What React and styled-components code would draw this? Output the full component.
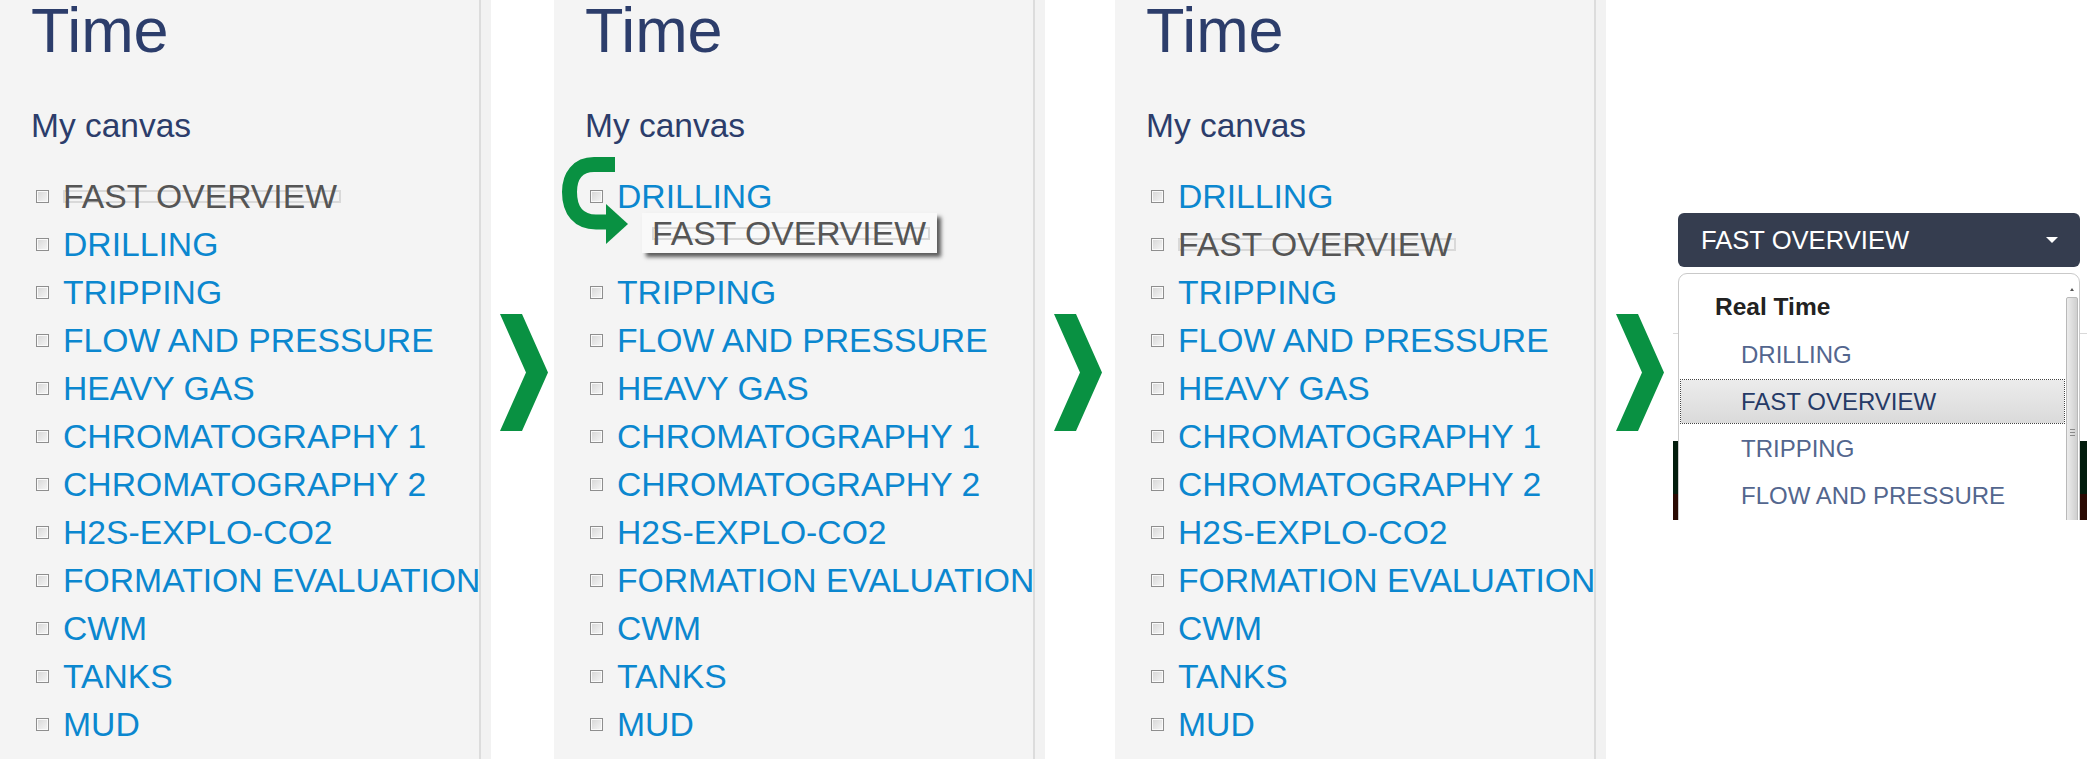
import React from 'react';
import styled, { createGlobalStyle } from 'styled-components';

const GlobalStyle = createGlobalStyle`
  html, body {
    margin: 0;
    padding: 0;
    background: #fff;
  }
  body {
    font-family: "Liberation Sans", Arial, sans-serif;
  }
`;

const Stage = styled.div`
  display: flex;
  width: 2087px;
  height: 759px;
  overflow: hidden;
  background: #fff;
`;

const Frame = styled.div`
  flex: none;
  display: flex;
  height: 100%;
  border-right: 10px solid #f2f2f2;
`;

const Panel = styled.section`
  position: relative;
  box-sizing: border-box;
  width: 481px;
  height: 100%;
  padding-left: 31px;
  background: #f4f4f4;
  border-right: 2px solid #dcdcdc;
  overflow: hidden;
`;

const Title = styled.h1`
  margin: 0;
  font-size: 63px;
  line-height: 60px;
  font-weight: normal;
  color: #2c3d6b;
`;

const Subtitle = styled.h2`
  margin: 42px 0 0;
  font-size: 33.5px;
  line-height: 48px;
  font-weight: normal;
  color: #2c3d6b;
`;

const List = styled.ul`
  margin: 22px 0 0;
  padding: 0;
  list-style: none;
`;

const Row = styled.li`
  position: relative;
  display: flex;
  align-items: center;
  height: 48px;
  font-size: 33.7px;
  line-height: 48px;
  white-space: nowrap;
`;

const Check = styled.span`
  flex: none;
  box-sizing: border-box;
  width: 13px;
  height: 13px;
  margin: 0 14px 0 5px;
  border: 1px solid #8e8e8e;
  background: linear-gradient(135deg, #d6d6d6, #f6f6f6);
  box-shadow: inset 0 0 0 1px #fafafa;
`;

const Label = styled.span`
  position: relative;
  z-index: 0;
  color: ${(p) => (p.$muted ? '#555' : '#0b87cf')};

  &::before {
    content: '';
    display: ${(p) => (p.$muted ? 'block' : 'none')};
    position: absolute;
    z-index: -1;
    left: 0;
    right: -4px;
    top: calc(50% - 6px);
    height: 13px;
    box-sizing: border-box;
    border: 2px solid #d9d9d9;
  }
`;

const Ghost = styled.div`
  position: absolute;
  left: 57px;
  top: -7px;
  box-sizing: border-box;
  width: 295px;
  height: 40px;
  padding-left: 10px;
  line-height: 40px;
  background: #f9f9f9;
  box-shadow: 4px 4px 4px rgba(40, 40, 40, 0.75);
`;

const DragArrow = styled.svg`
  position: absolute;
  left: 0;
  top: 149px;
  overflow: visible;
`;

const Gap = styled.div`
  flex: none;
  width: ${(p) => p.$w}px;
  padding: 314px 0 0 ${(p) => p.$pad}px;
  box-sizing: border-box;
`;

const AppArea = styled.div`
  position: relative;
  flex: 1;
  height: 520px;
  overflow: hidden;
  display: flex;
  flex-direction: column;
`;

const Blank = styled.div`
  height: 333px;
  flex: none;
`;

const Divider = styled.div`
  height: 107px;
  flex: none;
  border-top: 1px solid #d9d9d9;
`;

const Band = styled.div`
  flex: ${(p) => (p.$fill ? 1 : 'none')};
  height: ${(p) => p.$h || 0}px;
  background: ${(p) => p.$color};
`;

const Menu = styled.div`
  position: absolute;
  left: 5px;
  top: 213px;
  width: 402px;
`;

const Toggle = styled.div`
  display: flex;
  align-items: center;
  justify-content: space-between;
  height: 54px;
  padding: 0 22px 0 23px;
  border-radius: 6px;
  background: #353d4f;
  color: #fff;
  font-size: 25.6px;
`;

const Caret = styled.span`
  width: 0;
  height: 0;
  border-left: 6px solid transparent;
  border-right: 6px solid transparent;
  border-top: 6px solid #fff;
`;

const Dropdown = styled.div`
  display: flex;
  box-sizing: border-box;
  height: 420px;
  margin-top: 6px;
  padding-top: 9px;
  background: #fff;
  border: 1px solid #c9c9c9;
  border-radius: 9px 9px 0 0;
`;

const Options = styled.div`
  flex: 1;
`;

const Group = styled.div`
  height: 48px;
  padding-left: 36px;
  line-height: 48px;
  font-size: 24.5px;
  font-weight: bold;
  color: #222;
`;

const Option = styled.div`
  box-sizing: border-box;
  height: 47px;
  padding-left: 60px;
  border: 2px solid transparent;
  background-clip: padding-box;
  line-height: 43px;
  font-size: 24px;
  color: ${(p) => (p.$selected ? '#263a66' : '#53668e')};
  background-image: ${(p) => (p.$selected ? 'linear-gradient(#ececec, #dadada)' : 'none')};
  outline: ${(p) => (p.$selected ? '1px dotted #444' : 'none')};
  outline-offset: -2px;
`;

const Scrollbar = styled.div`
  flex: none;
  width: 12px;
  margin-right: 1px;
  display: flex;
  flex-direction: column;
  align-items: center;
`;

const ScrollUp = styled.span`
  margin: 5px 0 6px;
  width: 0;
  height: 0;
  border-left: 2px solid transparent;
  border-right: 2px solid transparent;
  border-bottom: 3px solid #555;
`;

const Thumb = styled.div`
  box-sizing: border-box;
  width: 12px;
  height: 270px;
  border: 1px solid #b9b9b9;
  border-radius: 2px;
  background: linear-gradient(90deg, #ececec, #cfcfcf);
  display: flex;
  flex-direction: column;
  justify-content: center;
  align-items: center;
  gap: 2px;
`;

const Grip = styled.span`
  width: 5px;
  height: 1px;
  background: #8a8a8a;
`;

const GREEN = '#099142';

const ITEMS = [
  'TRIPPING',
  'FLOW AND PRESSURE',
  'HEAVY GAS',
  'CHROMATOGRAPHY 1',
  'CHROMATOGRAPHY 2',
  'H2S-EXPLO-CO2',
  'FORMATION EVALUATION',
  'CWM',
  'TANKS',
  'MUD',
];

const Chevron = () => (
  <svg width="48" height="117" viewBox="0 0 48 117">
    <polygon points="0,0 22,0 48,58.5 22,117 0,117 26,58.5" fill={GREEN} />
  </svg>
);

const CanvasItem = ({ label, muted }) => (
  <Row>
    <Check />
    <Label $muted={muted}>{label}</Label>
  </Row>
);

const CanvasPanel = ({ children, overlay }) => (
  <Frame>
    <Panel>
      <Title>Time</Title>
      <Subtitle>My canvas</Subtitle>
      <List>{children}</List>
      {overlay}
    </Panel>
  </Frame>
);

const rest = ITEMS.map((name) => <CanvasItem key={name} label={name} />);

export default function App() {
  return (
    <>
      <GlobalStyle />
      <Stage>
        <CanvasPanel>
          <CanvasItem label="FAST OVERVIEW" muted />
          <CanvasItem label="DRILLING" />
          {rest}
        </CanvasPanel>

        <Gap $w={63} $pad={9}>
          <Chevron />
        </Gap>

        <CanvasPanel
          overlay={
            <DragArrow width="80" height="100" viewBox="0 0 80 100">
              <path
                d="M61 15.5 H40 C24 15.5 15.5 27 15.5 43 C15.5 62 25 73 42 73 H55"
                fill="none"
                stroke={GREEN}
                strokeWidth="15"
              />
              <polygon points="52,55 74,75 52,95" fill={GREEN} />
            </DragArrow>
          }
        >
          <CanvasItem label="DRILLING" />
          <Row>
            <Ghost>
              <Label $muted>FAST OVERVIEW</Label>
            </Ghost>
          </Row>
          {rest}
        </CanvasPanel>

        <Gap $w={70} $pad={9}>
          <Chevron />
        </Gap>

        <CanvasPanel>
          <CanvasItem label="DRILLING" />
          <CanvasItem label="FAST OVERVIEW" muted />
          {rest}
        </CanvasPanel>

        <Gap $w={67} $pad={10}>
          <Chevron />
        </Gap>

        <AppArea>
          <Blank />
          <Divider />
          <Band $h={53} $color="#031d0d" />
          <Band $fill $color="#2a0a03" />

          <Menu>
            <Toggle>
              <span>FAST OVERVIEW</span>
              <Caret />
            </Toggle>
            <Dropdown>
              <Options>
                <Group>Real Time</Group>
                <Option>DRILLING</Option>
                <Option $selected>FAST OVERVIEW</Option>
                <Option>TRIPPING</Option>
                <Option>FLOW AND PRESSURE</Option>
                <Option>HEAVY GAS</Option>
              </Options>
              <Scrollbar>
                <ScrollUp />
                <Thumb>
                  <Grip />
                  <Grip />
                  <Grip />
                </Thumb>
              </Scrollbar>
            </Dropdown>
          </Menu>
        </AppArea>
      </Stage>
    </>
  );
}
